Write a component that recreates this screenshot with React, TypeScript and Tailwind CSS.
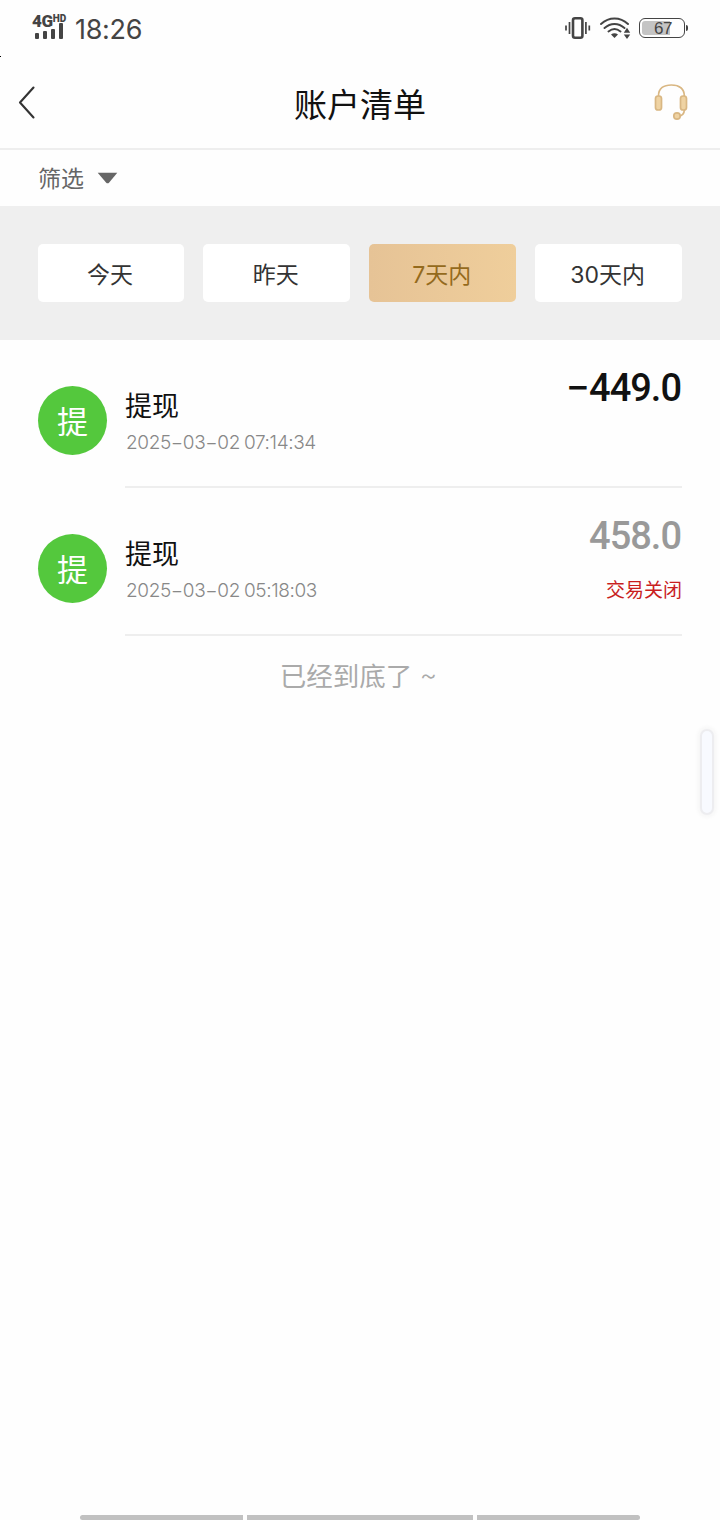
type Entry = {
  title: string;
  time: string;
  sign?: string;
  amount: string;
  closed?: boolean;
};

const entries: Entry[] = [
  { title: "提现", time: "2025−03−02 07:14:34", sign: "−", amount: "449.0" },
  { title: "提现", time: "2025−03−02 05:18:03", amount: "458.0", closed: true },
];

const ranges = ["今天", "昨天", "7天内", "30天内"];

function StatusBar() {
  return (
    <div className="flex h-14 items-start justify-between pr-8 pl-8 text-[#444]">
      <div className="flex">
        <div className="mt-[14px] w-[36px]">
          <div className="flex h-[14px] items-start font-['Roboto','Noto_Sans',sans-serif] font-bold">
            <span className="text-[17px] leading-[15px] font-black tracking-[-0.3px]">4G</span>
            <span className="mt-[-1px] text-[10px] leading-[11px] font-black">HD</span>
          </div>
          <svg className="mt-[-5px] ml-[3px] block" width="29" height="17" viewBox="0 0 29 17" fill="#444">
            <rect x="0" y="10" width="4" height="6" rx="1" />
            <rect x="8" y="8" width="4" height="8" rx="1" />
            <rect x="16" y="6" width="4" height="10" rx="1" />
            <rect x="24" y="0" width="4" height="16" rx="1" />
          </svg>
        </div>
        <span className="mt-[14px] ml-[7px] font-['Inter',sans-serif] text-[27px] leading-8 tracking-[-0.3px]">18:26</span>
      </div>
      <div className="mt-4 flex items-start">
        <svg width="26" height="24" viewBox="0 0 26 24" fill="none" stroke="#444">
          <rect x="8" y="2.2" width="9.4" height="19.6" rx="2" strokeWidth="2.600" />
          <path d="M4.500 6v12M20.900 6v12" strokeWidth="1.7" />
          <path d="M1 9.5v5M24.300 9.5v5" strokeWidth="1.7" />
        </svg>
        <svg className="ml-[9px]" width="31" height="24" viewBox="0 0 31 24" fill="none">
          <path d="M1 8c8-7.4 19-7.4 27 0M4.5 12c6-5.4 14-5.4 20 0M8.500 15.500c4-3.200 8-3.200 12 0" stroke="#444" strokeWidth="1.900" strokeLinecap="round" />
          <path d="M11 18.500q3.500-2.400 7 0l-3.500 3.500z" fill="#444" />
          <path d="M27 11.800l3.200 5h-6.400zM27 23l-3.200-4.500h6.400z" fill="#444" />
        </svg>
        <div className="ml-[8px] flex items-center pt-[2px]">
          <div className="flex h-5 w-[46px] rounded-[6px] border border-[#444] p-[2px]">
            <div className="flex h-[14px] w-[28px] items-center justify-end rounded-l-[3px] bg-[#c4c4c4]">
              <span className="mr-[-2px] pt-[1px] font-['Liberation_Sans',sans-serif] text-[17px] leading-4 tracking-[-0.4px]">67</span>
            </div>
          </div>
          <div className="ml-px h-[6px] w-[2px] rounded-r bg-[#444]" />
        </div>
      </div>
    </div>
  );
}

function Header() {
  return (
    <header className="grid h-[94px] grid-cols-[80px_1fr_80px] items-center border-b-2 border-[#eee]">
      <svg className="ml-[18px]" width="18" height="34" viewBox="0 0 18 34" fill="none" stroke="#333" strokeWidth="2.100" strokeLinecap="round" strokeLinejoin="round">
        <path d="M15.500 2.500L2 17.500l13.500 15" />
      </svg>
      <h1 className="pt-[1px] text-center text-[33px] leading-[48px] text-[#111]">账户清单</h1>
      <svg className="ml-[13px]" width="36" height="38" viewBox="0 0 36 38" fill="none" stroke="#d9b783" strokeWidth="1.7">
        <path d="M5.500 13C5.500 5 11 2 18.300 2s13 3 13 11M31.300 27c0 4-2.500 6-6.500 6.500" />
        <rect x="2.500" y="13" width="6" height="14" rx="2.600" fill="#efd3a3" />
        <rect x="27.500" y="13" width="6" height="14" rx="2.600" fill="#efd3a3" />
        <circle cx="24" cy="33" r="3.200" fill="#efd3a3" />
      </svg>
    </header>
  );
}

function Row({ entry }: { entry: Entry }) {
  return (
    <li className="flex h-[148px] pr-[38px] pl-[38px]">
      <div className="mt-[46px] flex size-[69px] shrink-0 items-center justify-center rounded-full bg-[#54c83d] text-[31px] leading-none text-white">
        <span className="mt-[-2px]">提</span>
      </div>
      <div className="ml-[18px] flex flex-1 justify-between border-b-2 border-[#eee]">
        <div className="mt-[46px]">
          <div className="text-[27px] leading-[38px] text-[#111]">{entry.title}</div>
          <div className="mt-[5px] ml-px font-['Inter',sans-serif] text-[19px] leading-7 font-light tracking-[-0.38px] text-[#888] [word-spacing:-1px]">
            {entry.time}
          </div>
        </div>
        <div className="mt-[26px] flex flex-col items-end">
          <div
            className={
              entry.closed
                ? "mr-px flex font-['Roboto',sans-serif] text-[38px] leading-[44px] font-medium tracking-[-1px] text-[#999]"
                : "mr-px flex font-['Roboto',sans-serif] text-[38px] leading-[44px] font-medium tracking-[-1px] text-[#111]"
            }
          >
            {entry.sign && <span className="mr-[2px] inline-block scale-x-110">{entry.sign}</span>}
            <span>{entry.amount}</span>
          </div>
          {entry.closed && <div className="mt-[17px] text-[19px] leading-7 text-[#c91f1f]">交易关闭</div>}
        </div>
      </div>
    </li>
  );
}

export default function App() {
  return (
    <div className="relative flex h-[1520px] w-[720px] flex-col overflow-hidden bg-[#fefefe] font-['Noto_Sans_CJK_SC',sans-serif]">
      <StatusBar />
      <div className="absolute top-14 left-0 h-px w-px bg-black" />
      <Header />
      <div className="flex h-14 items-center pl-[38px] text-[23px] leading-8 text-[#666]">
        <span className="mt-[-2px]">筛选</span>
        <svg className="ml-[13px]" width="21" height="12" viewBox="0 0 21 12" fill="#666">
          <path d="M.7 .8h19.600L12.200 10.400q-1.600 1.700-3.200 0z" />
        </svg>
      </div>
      <div className="grid h-[134px] grid-cols-4 gap-[19px] bg-[#efefef] py-[38px] pr-[38px] pl-[37.5px] font-['Inter','Noto_Sans_CJK_SC',sans-serif]">
        {ranges.map((label) => (
          <button
            key={label}
            className={
              label === "7天内"
                ? "flex items-center justify-center rounded-[5px] bg-linear-to-r from-[#e6c396] to-[#efce9b] pt-[3px] pr-[2px] text-[23px] leading-8 text-[#946a1d]"
                : "flex items-center justify-center rounded-[5px] bg-white pt-[3px] pr-[2px] text-[23px] leading-8 text-[#333]"
            }
          >
            {label}
          </button>
        ))}
      </div>
      <ul>
        {entries.map((entry) => (
          <Row key={entry.time} entry={entry} />
        ))}
      </ul>
      <p className="mt-5 pr-[3px] text-center font-['Inter','Noto_Sans_CJK_SC',sans-serif] text-[26.500px] leading-10 text-[#aaa]">
        已经到底了 <span className="inline-block -translate-y-0.5 font-light">~</span>
      </p>
      <div className="absolute top-[729px] left-[700px] h-[86px] w-[14px] rounded-full border-2 border-[#ededf0] bg-[#f8faff] shadow-[0_0_4px_2px_#f5f5f5]" />
      <div className="mt-auto flex h-[5px] justify-center gap-1">
        <div className="w-[163px] rounded-l-full bg-[#c1c1c1]" />
        <div className="w-[226px] bg-[#c1c1c1]" />
        <div className="w-[163px] rounded-r-full bg-[#c1c1c1]" />
      </div>
    </div>
  );
}
